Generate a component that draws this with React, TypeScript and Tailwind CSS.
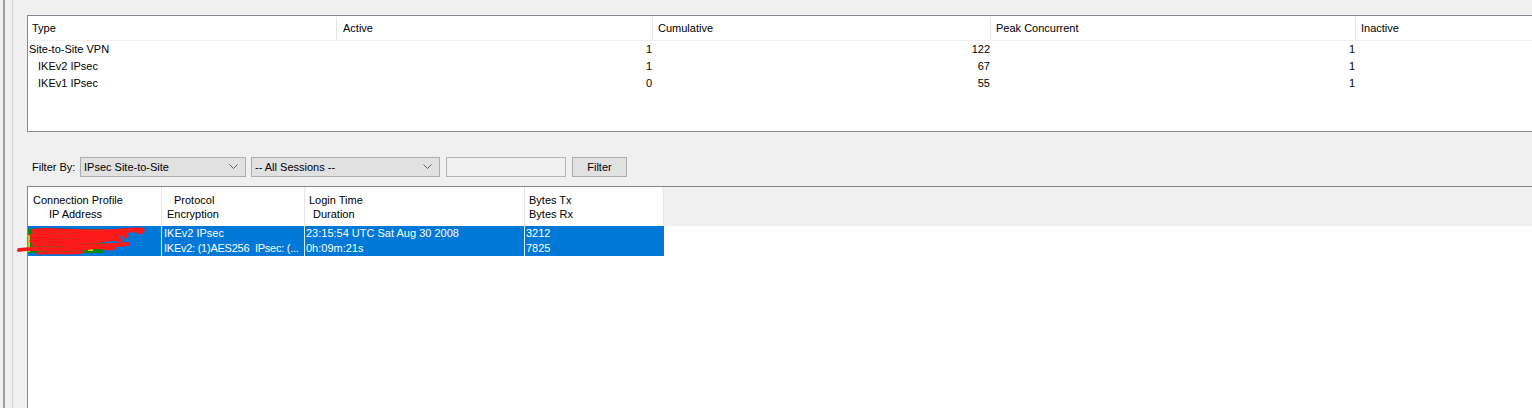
import React from 'react';

const summaryCols = [
  { label: 'Type', w: 'w-[309px]', pad: 'pl-[4px]' },
  { label: 'Active', w: 'w-[316px]', pad: 'pl-[6px]' },
  { label: 'Cumulative', w: 'w-[338px]', pad: 'pl-[5px]' },
  { label: 'Peak Concurrent', w: 'w-[365px]', pad: 'pl-[5px]' },
];

const summaryRows = [
  { type: 'Site-to-Site VPN', indent: false, active: '1', cumulative: '122', peak: '1' },
  { type: 'IKEv2 IPsec', indent: true, active: '1', cumulative: '67', peak: '1' },
  { type: 'IKEv1 IPsec', indent: true, active: '0', cumulative: '55', peak: '1' },
];

const Chevron: React.FC = () => (
  <svg width="9" height="6" viewBox="0 0 9 6" className="shrink-0">
    <path d="M0.5 0.5 L4.5 4.5 L8.5 0.5" fill="none" stroke="#606060" strokeWidth="1" />
  </svg>
);

const Combo: React.FC<{ text: string; width: string }> = ({ text, width }) => (
  <div className={`${width} h-[20px] flex items-center justify-between border border-[#adadad] bg-[#e1e1e1] pl-[3px] pr-[7px]`}>
    <span>{text}</span>
    <Chevron />
  </div>
);

// red marker scribble over the hidden peer address
const Scribble: React.FC = () => (
  <svg className="absolute left-[-12px] top-0" width="140" height="30" viewBox="0 0 140 30">
    <rect x="12" y="3" width="75" height="24" fill="#0a8a0a" />
    <rect x="12" y="9" width="2" height="17" fill="#c8d400" />
    <rect x="72" y="22" width="5" height="3" fill="#c8d400" />
    <path d="M18 5 C40 3 70 8 104 5 S122 6 124 6" stroke="#ff1a1a" strokeWidth="5" fill="none" strokeLinecap="round" />
    <path d="M16 10 C40 8 60 13 90 9 S105 10 110 10" stroke="#ff1a1a" strokeWidth="5" fill="none" strokeLinecap="round" />
    <path d="M16 15 C30 12 60 18 85 14 S100 15 104 14" stroke="#ff1a1a" strokeWidth="5" fill="none" strokeLinecap="round" />
    <path d="M18 19 C36 17 70 22 112 18" stroke="#ff1a1a" strokeWidth="4" fill="none" strokeLinecap="round" />
    <path d="M3 24 C20 21 50 25 70 22 S90 24 98 22" stroke="#ff1a1a" strokeWidth="4" fill="none" strokeLinecap="round" />
    <path d="M22 27 C40 26 56 28 66 26" stroke="#ff1a1a" strokeWidth="3" fill="none" strokeLinecap="round" />
  </svg>
);

const App: React.FC = () => {
  return (
    <div className="flex h-[408px] w-[1532px] overflow-hidden bg-[#f0f0f0] font-['Liberation_Sans',Arial,sans-serif] text-[11px] text-black">
      <div className="w-[3px] shrink-0" />
      <div className="w-[9px] shrink-0 border-l-2 border-[#9c9c9c]" />
      <div className="w-[15px] shrink-0 border-l border-[#d6d6d6]" />

      <div className="flex min-w-0 flex-1 flex-col pt-[15px]">
        {/* session summary */}
        <div className="flex h-[117px] shrink-0 flex-col border-y border-l border-[#828790] bg-white">
          <div className="flex h-[25px] shrink-0 border-b border-[#f0f0f0] pt-[1px]">
            {summaryCols.map((c) => (
              <div key={c.label} className={`${c.w} ${c.pad} flex shrink-0 items-center border-r border-[#e5e5e5]`}>
                {c.label}
              </div>
            ))}
            <div className="flex flex-1 items-center pl-[5px]">Inactive</div>
          </div>
          {summaryRows.map((r) => (
            <div key={r.type} className="flex h-[17px] shrink-0 items-center leading-[17px]">
              <div className={`w-[309px] shrink-0 ${r.indent ? 'pl-[10px]' : 'pl-[1px]'}`}>{r.type}</div>
              <div className="w-[316px] shrink-0 pr-[1px] text-right">{r.active}</div>
              <div className="w-[338px] shrink-0 pr-[1px] text-right">{r.cumulative}</div>
              <div className="w-[365px] shrink-0 pr-[1px] text-right">{r.peak}</div>
              <div className="flex-1" />
            </div>
          ))}
        </div>

        {/* filter bar */}
        <div className="mt-[25px] flex h-[20px] shrink-0 items-center">
          <span className="w-[53px] shrink-0 pl-[5px]">Filter By:</span>
          <Combo text="IPsec Site-to-Site" width="w-[166px]" />
          <div className="ml-[5px]">
            <Combo text="-- All Sessions --" width="w-[189px]" />
          </div>
          <div className="ml-[6px] h-[20px] w-[120px] border border-[#b4b4b4] bg-[#f0f0f0]" />
          <div className="ml-[6px] flex h-[20px] w-[55px] items-center justify-center border border-[#adadad] bg-[#e1e1e1]">
            Filter
          </div>
        </div>

        {/* sessions table */}
        <div className="mt-[9px] flex flex-1 flex-col border-l border-t border-[#828790] bg-white">
          <div className="flex h-[39px] shrink-0 bg-[#f0f0f0] leading-[14px]">
            <div className="flex w-[134px] shrink-0 flex-col justify-center border-r border-[#e5e5e5] bg-white pl-[5px]">
              <span>Connection Profile</span>
              <span className="pl-[16px]">IP Address</span>
            </div>
            <div className="flex w-[143px] shrink-0 flex-col justify-center border-r border-[#e5e5e5] bg-white pl-[5px]">
              <span className="pl-[7px]">Protocol</span>
              <span>Encryption</span>
            </div>
            <div className="flex w-[220px] shrink-0 flex-col justify-center border-r border-[#e5e5e5] bg-white pl-[4px]">
              <span>Login Time</span>
              <span className="pl-[4px]">Duration</span>
            </div>
            <div className="flex w-[139px] shrink-0 flex-col justify-center border-r border-[#e5e5e5] bg-white pl-[4px]">
              <span>Bytes Tx</span>
              <span>Bytes Rx</span>
            </div>
          </div>

          <div className="flex h-[30px] w-[636px] shrink-0 bg-[#0078d7] leading-[15px] text-white">
            <div className="relative w-[134px] shrink-0 border-r border-[#d9e9f8]">
              <Scribble />
            </div>
            <div className="flex w-[143px] shrink-0 flex-col justify-center overflow-hidden whitespace-pre border-r border-[#d9e9f8] pl-[2px]">
              <span>IKEv2 IPsec</span>
              <span className="tracking-[-0.25px]">IKEv2: (1)AES256  IPsec: (...</span>
            </div>
            <div className="flex w-[220px] shrink-0 flex-col justify-center border-r border-[#d9e9f8] pl-[1px]">
              <span>23:15:54 UTC Sat Aug 30 2008</span>
              <span>0h:09m:21s</span>
            </div>
            <div className="flex w-[139px] shrink-0 flex-col justify-center pl-[1px]">
              <span>3212</span>
              <span>7825</span>
            </div>
          </div>
        </div>
      </div>
    </div>
  );
};

export default App;
